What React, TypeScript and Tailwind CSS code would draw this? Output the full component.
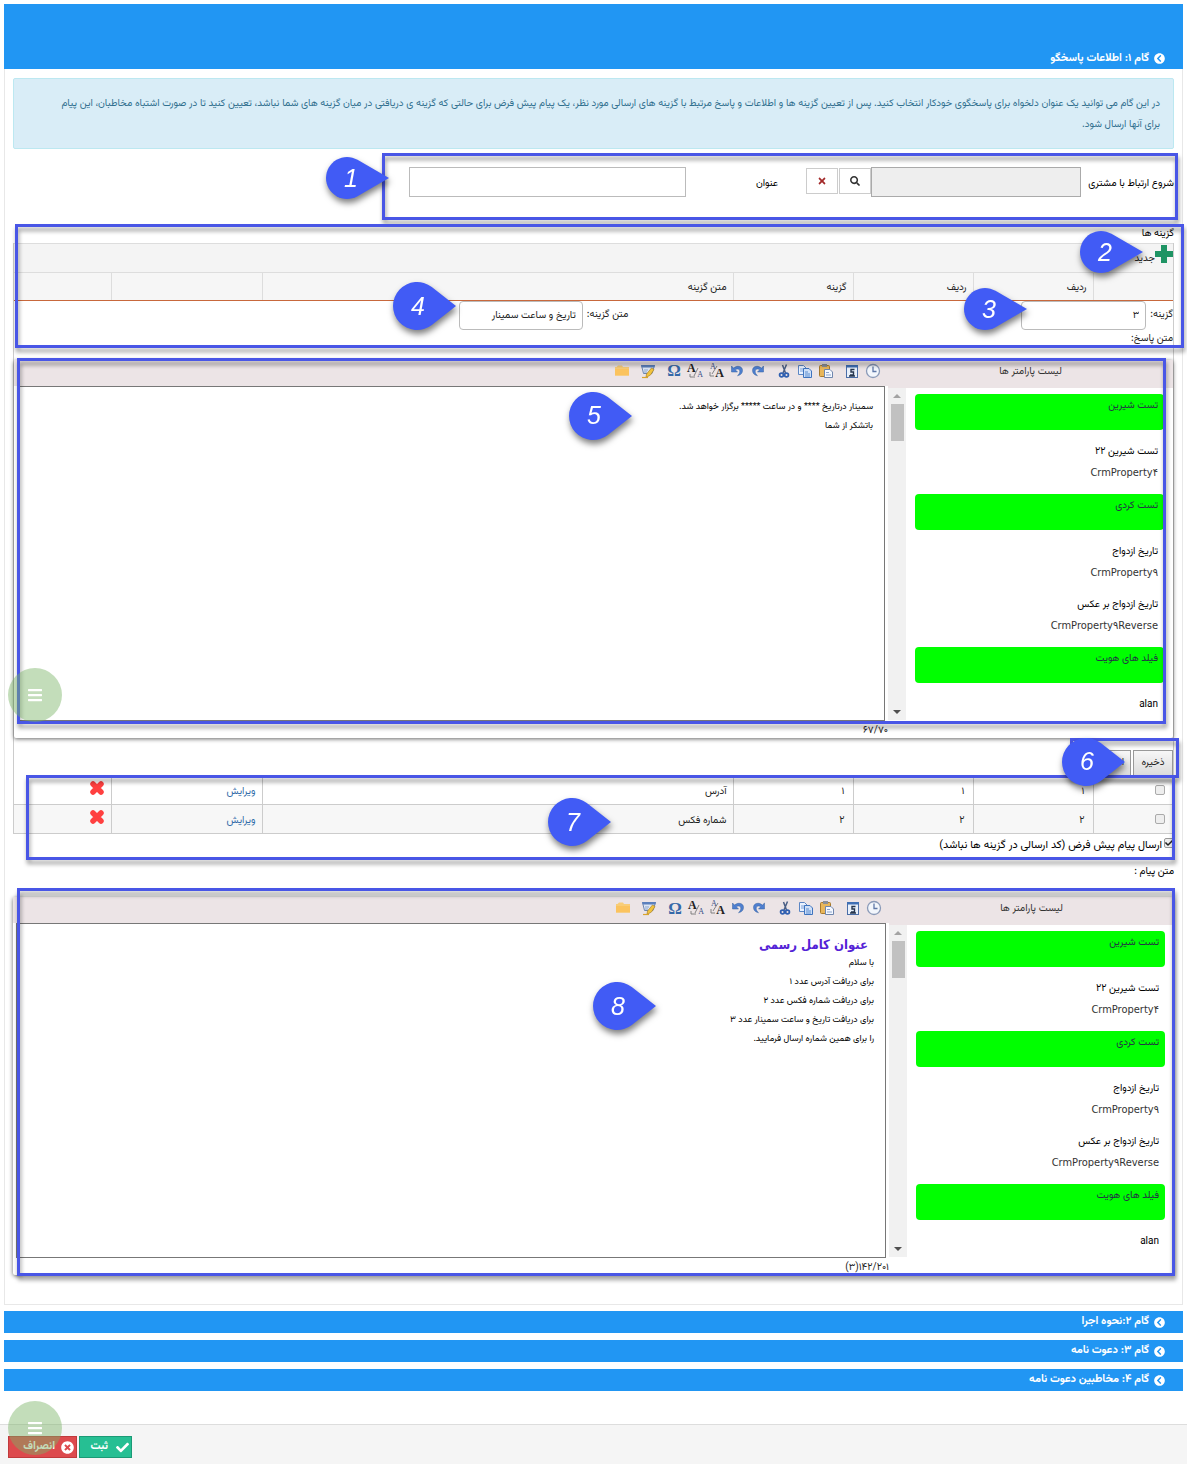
import type { ReactNode } from "react";
import {
  FaBars,
  FaCheck,
  FaChevronCircleLeft,
  FaSearch,
  FaTimes,
  FaTimesCircle,
} from "react-icons/fa";

function Frame({ className }: { className: string }) {
  return (
    <div
      aria-hidden="true"
      className={`pointer-events-none absolute z-10 border-[3px] border-[#4956e6] drop-shadow-[1px_4px_2px_rgba(0,0,0,0.4)] ${className}`}
    />
  );
}

function Pin({ n, small, className }: { n: number; small?: boolean; className: string }) {
  return (
    <div
      className={`pointer-events-none absolute z-20 flex w-16 items-center drop-shadow-[1px_4px_3px_rgba(0,0,0,0.5)] ${small ? "h-[42px]" : "h-12"} ${className}`}
      dir="ltr"
    >
      <svg className="absolute inset-0 h-full w-full" viewBox={small ? "0 0 64 42" : "0 0 64 48"}>
        {small ? (
          <path fill="#415bf5" d="M63 21 31.500 2.800A21 21 0 1 0 31.500 39.200Z" />
        ) : (
          <path fill="#415bf5" d="M63 24 38.800 5.100A24 24 0 1 0 38.800 42.900Z" />
        )}
      </svg>
      <span className="relative w-[50px] text-center font-['Liberation_Sans'] text-[25px] leading-none text-white italic">
        {n}
      </span>
    </div>
  );
}

function ClockIcon() {
  return (
    <svg viewBox="0 0 16 16" className="size-4">
      <circle cx="8" cy="8" r="6.500" fill="#f2f6fc" stroke="#8a9ab8" strokeWidth="1.300" />
      <path d="M8 3.500V8.500H11.500" fill="none" stroke="#5f78a8" strokeWidth="1.300" />
    </svg>
  );
}

function CalendarIcon() {
  return (
    <svg viewBox="0 0 16 16" className="size-4">
      <rect x="2.500" y="2.500" width="11" height="12" fill="#e8f0fb" stroke="#4a6ea8" />
      <rect x="2" y="2" width="12" height="2.500" fill="#3f6fb5" />
      <path d="M10.500 6.500H7V9H9.500V12H6M5 13H11" fill="none" stroke="#26364f" strokeWidth="1.400" />
    </svg>
  );
}

function PasteIcon() {
  return (
    <svg viewBox="0 0 16 16" className="size-4">
      <rect x="1.500" y="2.500" width="10" height="11" rx="1" fill="#e8b65a" stroke="#a87a2c" />
      <rect x="4" y="1" width="5" height="3" fill="#8a8f98" />
      <path d="M6.500 6.500H12L14.500 9V14.500H6.500Z" fill="#f4f8ff" stroke="#6f86ad" />
      <path d="M8 9.500H11M8 12H13" stroke="#8aa3cc" />
    </svg>
  );
}

function CopyIcon() {
  return (
    <svg viewBox="0 0 16 16" className="size-4">
      <path d="M1.500 2.500H6.500L9 5V11.500H1.500Z" fill="#eaf2ff" stroke="#5c86c4" />
      <path d="M3 6H7M3 8H6" stroke="#7ba0d8" />
      <path d="M6.500 5.500H12L14.500 8V14.500H6.500Z" fill="#cfe0f8" stroke="#3f74bf" />
      <path d="M8 9H11M8 11H13M8 13H13" stroke="#5a8cd0" />
    </svg>
  );
}

function CutIcon() {
  return (
    <svg viewBox="0 0 16 16" className="size-4" fill="none">
      <path d="M10.500 1.500 7 10M6.500 2 9.500 10" stroke="#4a5f86" strokeWidth="1.500" />
      <circle cx="5.500" cy="12" r="1.900" stroke="#2f5fb0" strokeWidth="1.800" />
      <circle cx="10.500" cy="12" r="1.900" stroke="#2f5fb0" strokeWidth="1.800" />
    </svg>
  );
}

function UndoIcon({ flip }: { flip?: boolean }) {
  return (
    <svg viewBox="0 0 16 16" className={flip ? "size-4 -scale-x-100" : "size-4"}>
      <path
        d="M2.500 3V9H8.500L6.300 6.800C8 5.300 10.800 5.800 10.800 8.300 10.800 10.300 9.800 11.700 8.500 12.700 12 12 13.500 10 13.500 7.300 13.500 3.200 8 1.800 4.600 5.100Z"
        fill="#4f7fd0"
        stroke="#35609f"
        strokeWidth="0.500"
      />
    </svg>
  );
}

function FontSizeIcon({ shrink }: { shrink?: boolean }) {
  return (
    <span className="relative block size-4 font-['Liberation_Serif'] text-[#222]" dir="ltr">
      <span className={`absolute text-[12px] leading-none font-bold ${shrink ? "-top-px left-0" : "right-0 bottom-0"}`}>A</span>
      <span className={`absolute text-[8px] leading-none text-[#3a4f86] ${shrink ? "right-0 bottom-0" : "top-0 left-0.5"}`}>A</span>
      <svg viewBox="0 0 16 16" className="absolute inset-0">
        <path d={shrink ? "M3 11V14H8M11 5 7 13" : "M2 9V13H6M9 3 4 11"} fill="none" stroke="#777" strokeWidth="0.900" />
      </svg>
    </span>
  );
}

function NoteIcon() {
  return (
    <svg viewBox="0 0 16 16" className="size-4">
      <path d="M1.500 2.500H14.500L12 10.500H3.500Z" fill="#dce6f5" stroke="#6c86b0" />
      <path d="M1 2H15L14.200 4.500H1.800Z" fill="#5b80bd" />
      <path d="M4 7H8M4 9H7" stroke="#8ba3cc" />
      <path d="M14 6.500 10.500 12 6 14.500 6.500 11 11.500 5Z" fill="#f2c33c" stroke="#a8812a" strokeWidth="0.700" />
      <path d="M2 14.500H8" stroke="#d8a32c" strokeWidth="1.200" />
    </svg>
  );
}

function FolderIcon() {
  return (
    <svg viewBox="0 0 16 16" className="size-4">
      <path d="M1 4H2.500L4 2.500H8L9 4H15V12.500H1Z" fill="#f8cd78" />
      <path d="M1 6H15V12.500H1Z" fill="#fbc35e" />
    </svg>
  );
}

const toolGroups: { label: string; icon: ReactNode }[][] = [
  [
    { label: "ساعت", icon: <ClockIcon /> },
    { label: "تاریخ", icon: <CalendarIcon /> },
  ],
  [
    { label: "چسباندن", icon: <PasteIcon /> },
    { label: "کپی", icon: <CopyIcon /> },
    { label: "برش", icon: <CutIcon /> },
  ],
  [
    { label: "انجام دوباره", icon: <UndoIcon flip /> },
    { label: "واگرد", icon: <UndoIcon /> },
    { label: "بزرگ کردن قلم", icon: <FontSizeIcon /> },
    { label: "کوچک کردن قلم", icon: <FontSizeIcon shrink /> },
    {
      label: "نماد",
      icon: (
        <span className="font-['Liberation_Serif'] text-[17px] leading-none font-bold text-[#3568a8]">Ω</span>
      ),
    },
  ],
  [{ label: "یادداشت", icon: <NoteIcon /> }],
  [{ label: "پوشه", icon: <FolderIcon /> }],
];

const parameters = [
  { group: "تست شیرین" },
  { title: "تست شیرین ۲۲", code: "CrmProperty۴" },
  { group: "تست کردی" },
  { title: "تاریخ ازدواج", code: "CrmProperty۹" },
  { title: "تاریخ ازدواج بر عکس", code: "CrmProperty۹Reverse" },
  { group: "فیلد های هویت" },
  { title: "alan" },
];

function Editor({ label, counter, children }: { label: string; counter: string; children: ReactNode }) {
  return (
    <div className="flex rounded-xs bg-white shadow-[0_1px_4px_rgba(0,0,0,0.6)]">
      <aside className="w-[285px] shrink-0">
        <h3 className="h-7 bg-[#ece4e6] text-center leading-6 text-[#333]">لیست پارامتر ها</h3>
        <div className="flex h-[332px] overflow-hidden">
          <ul className="flex min-w-0 flex-1 flex-col gap-[11px] px-[9px] pt-1.5 leading-[21px]">
            {parameters.map((p, i) =>
              p.group ? (
                <li key={i} className="h-9 shrink-0 rounded-sm bg-[#00ff00] px-1.5 pt-px text-[#234]">
                  {p.group}
                </li>
              ) : (
                <li key={i} className="shrink-0 px-1.5">
                  <p className="text-black">{p.title}</p>
                  {p.code && (
                    <p className="font-['DejaVu_Sans_Condensed',sans-serif] text-[11px] text-[#333]">
                      <bdi dir="ltr">{p.code}</bdi>
                    </p>
                  )}
                </li>
              ),
            )}
          </ul>
          <div className="flex w-[18px] flex-col items-center bg-[#f1f1f1] py-1.5" aria-hidden="true">
            <span className="border-x-4 border-b-4 border-x-transparent border-b-[#a3a3a3]" />
            <span className="mt-1.5 h-[37px] w-[13px] bg-[#c1c1c1]" />
            <span className="mt-auto border-x-4 border-t-4 border-x-transparent border-t-[#505050]" />
          </div>
        </div>
      </aside>
      <div className="min-w-0 flex-1">
        <div className="flex h-[26px] items-center gap-1.5 bg-[#ece4e6] ps-[5px] pb-1">
          {toolGroups.map((group, i) => (
            <div key={i} className="flex gap-px">
              {group.map((tool) => (
                <button key={tool.label} type="button" aria-label={tool.label} className="flex size-5 items-center justify-center">
                  {tool.icon}
                </button>
              ))}
            </div>
          ))}
        </div>
        <div
          role="textbox"
          aria-multiline="true"
          aria-label={label}
          contentEditable
          suppressContentEditableWarning
          className="mx-[3px] h-[335px] border border-[#777] px-[11px] pt-[11px] text-[9px] leading-[19px] text-black outline-none"
        >
          {children}
        </div>
        <p className="h-[17px] leading-[19px] text-[#222]">
          <bdi dir="ltr">{counter}</bdi>
        </p>
      </div>
    </div>
  );
}

function StepBar({ children, className }: { children: ReactNode; className: string }) {
  return (
    <button
      type="button"
      className={`flex w-full gap-[5px] bg-[#2196f3] pe-4 ps-[18px] text-[11px] font-bold text-white ${className}`}
    >
      <FaChevronCircleLeft className="size-[11px]" />
      {children}
    </button>
  );
}

function MenuButton({ className }: { className: string }) {
  return (
    <button
      type="button"
      aria-label="منو"
      className={`absolute z-20 flex size-[54px] items-center justify-center rounded-full bg-[#79b465]/45 text-white ${className}`}
    >
      <FaBars className="size-4" />
    </button>
  );
}

const columns = ["", "ردیف", "ردیف", "گزینه", "متن گزینه", "", ""];
const rows = [
  { n: "۱", text: "آدرس" },
  { n: "۲", text: "شماره فکس" },
];

export default function App() {
  return (
    <div
      dir="rtl"
      className="bg-white font-['Vazirmatn','DejaVu_Sans_Condensed',sans-serif] text-[10px] leading-5 text-[#222]"
    >
      <main className="px-1 pt-1">
        <StepBar className="h-[65px] items-end pb-[5px] leading-[11px]">گام ۱: اطلاعات پاسخگو</StepBar>

        <section className="border-x border-b border-[#e8e8e8] px-2 pt-[9px] pb-[29px]">
          <p className="rounded-xs border border-[#bce8f1] bg-[#d9edf7] px-[13px] pt-3.5 pb-[13px] leading-[21px] text-[#31708f]">
            در این گام می توانید یک عنوان دلخواه برای پاسخگوی خودکار انتخاب کنید. پس از تعیین گزینه ها و اطلاعات و پاسخ مرتبط با گزینه های ارسالی مورد نظر، یک پیام پیش فرض برای حالتی که گزینه ی دریافتی در میان گزینه های شما نباشد، تعیین کنید تا در صورت اشتباه مخاطبان، این پیام
            <br />
            برای آنها ارسال شود.
          </p>

          <div className="relative flex h-[75px] items-start pt-[18px]">
            <Frame className="-right-1 bottom-1 top-1 w-[796px]" />
            <Pin n={1} small className="top-2 right-[784px]" />
            <label htmlFor="start" className="w-[93px] pt-[7px] text-black">شروع ارتباط با مشتری</label>
            <input id="start" readOnly className="h-[30px] w-[210px] border border-[#aaa] bg-[#eee] px-2" />
            <button type="button" aria-label="جستجو" className="mt-px flex h-[26px] w-8 items-center justify-center border border-[#ccc] bg-white">
              <FaSearch className="size-2.5 text-[#333]" />
            </button>
            <button type="button" aria-label="پاک کردن" className="mt-px ms-px flex h-[26px] w-8 items-center justify-center border border-[#ccc] bg-white">
              <FaTimes className="size-2.5 text-[#a32a2a]" />
            </button>
            <label htmlFor="title" className="ms-7 w-[92px] pt-[7px] text-black">عنوان</label>
            <input id="title" className="h-[30px] w-[277px] border border-[#bbb] bg-white px-2" />
          </div>

          <div className="relative">
            <Frame className="-right-2.5 left-0.5 top-0 h-[124px]" />
            <Pin n={2} small className="top-[7px] right-[30px]" />
            <Pin n={3} small className="top-[64px] right-[146px]" />
            <Pin n={4} className="top-[58px] right-[717px]" />
            <h2 className="h-[19px] text-black">گزینه ها</h2>

            <div className="border-x border-[#ccc]">
              <div className="flex h-[29px] border-t border-[#ddd] bg-[#f4f4f4]">
                <button type="button" className="flex items-start">
                  <svg viewBox="0 0 18 18" className="mt-px size-[18px]" fill="#1f9464">
                    <path d="M6 0H12V6H18V12H12V18H6V12H0V6H6Z" />
                  </svg>
                  <span className="pt-[5px]">جدید</span>
                </button>
              </div>

              <table className="w-full table-fixed border-collapse">
                <colgroup>
                  <col className="w-20" />
                  <col className="w-[120px]" />
                  <col className="w-[120px]" />
                  <col className="w-[120px]" />
                  <col />
                  <col className="w-[151px]" />
                  <col className="w-[97px]" />
                </colgroup>
                <thead>
                  <tr className="h-[27px] bg-[#f6f6f6]">
                    {columns.map((c, i) => (
                      <th
                        key={i}
                        scope="col"
                        className="border-t border-e border-[#ddd] px-1.5 pt-1 pb-0 text-start font-normal last:border-e-0"
                      >
                        {c}
                      </th>
                    ))}
                  </tr>
                </thead>
                <tbody>
                  <tr>
                    <td colSpan={7} className="p-0">
                      <div className="flex border-t border-[#c8683c]">
                        <div className="flex w-[47%] items-center gap-1">
                          <label htmlFor="option">گزینه:</label>
                          <input id="option" defaultValue="۳" className="h-[29px] w-[125px] rounded-sm border border-[#bbb] bg-white px-1.5" />
                        </div>
                        <div className="flex items-center gap-1">
                          <label htmlFor="option-text">متن گزینه:</label>
                          <input id="option-text" defaultValue="تاریخ و ساعت سمینار" className="h-[29px] w-[124px] rounded-sm border border-[#bbb] bg-white px-1.5" />
                        </div>
                      </div>
                      <p className="mb-3 h-[18px] leading-[18px]">متن پاسخ:</p>

                      <div className="relative">
                        <Frame className="-top-0.5 right-[7px] bottom-3.5 left-[3px]" />
                        <Pin n={5} className="top-8 right-[540px]" />
                        <MenuButton className="bottom-4 -left-1.5" />
                        <Editor label="متن پاسخ" counter="۶۷/۷۰">
                          <p>سمینار درتاریخ **** و در ساعت ***** برگزار خواهد شد.</p>
                          <p>باتشکر از شما</p>
                        </Editor>
                      </div>

                      <div className="relative flex gap-0.5 pt-3">
                        <Frame className="-right-1.5 top-0 -bottom-0.5 w-[109px]" />
                        <Pin n={6} className="top-0 right-[47px]" />
                        <button type="button" className="h-[26px] min-w-10 border border-[#999] bg-linear-to-b from-[#f7f7f7] to-[#dcdcdc] px-1.5">
                          ذخیره
                        </button>
                        <button type="button" className="h-[26px] min-w-10 border border-[#999] bg-linear-to-b from-[#f7f7f7] to-[#dcdcdc] px-1.5">
                          انصراف
                        </button>
                      </div>
                    </td>
                  </tr>
                  {rows.map((r) => (
                    <tr key={r.n} className="h-[29px] border-b border-[#ccc] even:bg-white odd:bg-[#f7f7f7]">
                      <td className="border-e border-[#ccc] px-2 py-0">
                        <input type="checkbox" aria-label={r.text} className="block size-2.5 appearance-none rounded-xs border border-[#aaa] bg-[#eee]" />
                      </td>
                      <td className="border-e border-[#ccc] px-2 pt-1 pb-0">{r.n}</td>
                      <td className="border-e border-[#ccc] px-2 pt-1 pb-0">{r.n}</td>
                      <td className="border-e border-[#ccc] px-2 pt-1 pb-0">{r.n}</td>
                      <td className="border-e border-[#ccc] px-1.5 pt-1 pb-0">{r.text}</td>
                      <td className="border-e border-[#ccc] px-1.5 pt-1 pb-0">
                        <a href="#edit" className="text-[#2f6aa8]">ویرایش</a>
                      </td>
                      <td className="px-[7px] py-0">
                        <button type="button" aria-label="حذف" className="block pb-1">
                          <svg viewBox="0 0 14 14" className="size-3.5" fill="none" stroke="#ff4040" strokeWidth="5.500" strokeLinecap="round">
                            <path d="M3 3 11 11M11 3 3 11" />
                          </svg>
                        </button>
                      </td>
                    </tr>
                  ))}
                </tbody>
              </table>
            </div>

            <Frame className="-right-px -bottom-0.5 left-[13px] h-[85px]" />
            <Pin n={7} className="bottom-3 right-[562px]" />
            <label className="flex h-6 items-center gap-0.5 text-[11px] text-black">
              <span className="relative mb-1.5 block size-2.5">
                <input type="checkbox" defaultChecked className="block size-2.5 appearance-none rounded-xs border border-[#999] bg-[#eee]" />
                <FaCheck className="pointer-events-none absolute top-px left-px size-2 text-[#222]" />
              </span>
              ارسال پیام پیش فرض (کد ارسالی در گزینه ها نباشد)
            </label>
          </div>

          <p className="mt-1 mb-[15px] text-black">متن پیام :</p>

          <div className="relative">
            <Frame className="-top-[9px] -right-px -bottom-px left-1" />
            <Pin n={8} className="top-[85px] right-[517px]" />
            <Editor label="متن پیام" counter="(۳)۱۴۲/۲۰۱">
              <p className="px-1.5 font-['DejaVu_Sans_Condensed',sans-serif] text-[13px] font-bold text-[#5423d6]">عنوان کامل رسمی</p>
              <p>با سلام</p>
              <p>برای دریافت آدرس عدد ۱</p>
              <p>برای دریافت شماره فکس عدد ۲</p>
              <p>برای دریافت تاریخ و ساعت سمینار عدد ۳</p>
              <p>را برای همین شماره ارسال فرمایید.</p>
            </Editor>
          </div>
        </section>

        <div className="mt-1.5 flex flex-col gap-[7px]">
          <StepBar className="h-[22px] items-center">گام ۲:نحوه اجرا</StepBar>
          <StepBar className="h-[22px] items-center">گام ۳: دعوت نامه</StepBar>
          <StepBar className="h-[22px] items-center">گام ۴: مخاطبین دعوت نامه</StepBar>
        </div>
      </main>

      <footer className="relative mt-[33px] flex h-10 justify-end gap-0.5 border-t border-[#ddd] bg-[#f5f5f5] px-2 pt-[11px]">
        <div className="pointer-events-none absolute -top-6 left-2 z-20 h-[57px] w-[54px] overflow-hidden">
          <MenuButton className="pointer-events-auto top-0 left-0" />
        </div>
        <button type="submit" className="flex h-[22px] w-[53px] items-center gap-2 border border-[#1b9a76] bg-[#26bf93] ps-0.5 text-[11px] font-bold text-white">
          <FaCheck className="size-[13px]" />
          ثبت
        </button>
        <button type="button" className="flex h-[22px] w-[69px] items-center gap-1.5 border border-[#c03a3c] bg-[#dd4a4d] ps-0.5 text-[11px] font-bold text-white">
          <FaTimesCircle className="size-[13px]" />
          انصراف
        </button>
      </footer>
    </div>
  );
}
